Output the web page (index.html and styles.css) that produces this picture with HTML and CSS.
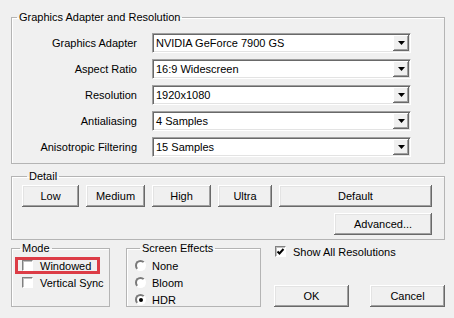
FILE: index.html
```html
<!DOCTYPE html>
<html lang="en">
<head>
  <meta charset="UTF-8" />
  <title>Display Settings</title>
  <link rel="stylesheet" href="styles.css">
</head>
<body>
  <div class="dialog">
    <fieldset class="group group-adapter">
      <legend>Graphics Adapter and Resolution</legend>
      <div class="field-row">
        <span class="field-label">Graphics Adapter</span>
        <div class="combo"><span class="combo-value">NVIDIA GeForce 7900 GS</span><span class="combo-btn"><svg width="7" height="4" viewBox="0 0 7 4"><path d="M0 0 H7 L3.5 4 Z" fill="#000"/></svg></span></div>
      </div>
      <div class="field-row">
        <span class="field-label">Aspect Ratio</span>
        <div class="combo"><span class="combo-value">16:9 Widescreen</span><span class="combo-btn"><svg width="7" height="4" viewBox="0 0 7 4"><path d="M0 0 H7 L3.5 4 Z" fill="#000"/></svg></span></div>
      </div>
      <div class="field-row">
        <span class="field-label">Resolution</span>
        <div class="combo"><span class="combo-value">1920x1080</span><span class="combo-btn"><svg width="7" height="4" viewBox="0 0 7 4"><path d="M0 0 H7 L3.5 4 Z" fill="#000"/></svg></span></div>
      </div>
      <div class="field-row">
        <span class="field-label">Antialiasing</span>
        <div class="combo"><span class="combo-value">4 Samples</span><span class="combo-btn"><svg width="7" height="4" viewBox="0 0 7 4"><path d="M0 0 H7 L3.5 4 Z" fill="#000"/></svg></span></div>
      </div>
      <div class="field-row">
        <span class="field-label">Anisotropic Filtering</span>
        <div class="combo"><span class="combo-value">15 Samples</span><span class="combo-btn"><svg width="7" height="4" viewBox="0 0 7 4"><path d="M0 0 H7 L3.5 4 Z" fill="#000"/></svg></span></div>
      </div>
    </fieldset>

    <fieldset class="group group-detail">
      <legend>Detail</legend>
      <div class="preset-row">
        <button class="btn btn-low">Low</button>
        <button class="btn btn-medium">Medium</button>
        <button class="btn btn-high">High</button>
        <button class="btn btn-ultra">Ultra</button>
        <button class="btn btn-default">Default</button>
      </div>
      <div class="advanced-row">
        <button class="btn btn-advanced">Advanced...</button>
      </div>
    </fieldset>

    <div class="bottom-row">
      <fieldset class="group group-mode">
        <legend>Mode</legend>
        <div class="check-row highlighted">
          <span class="checkbox"></span>
          <span>Windowed</span>
        </div>
        <div class="check-row">
          <span class="checkbox"></span>
          <span>Vertical Sync</span>
        </div>
      </fieldset>

      <fieldset class="group group-effects">
        <legend>Screen Effects</legend>
        <div class="radio-row"><span class="radio"></span><span>None</span></div>
        <div class="radio-row"><span class="radio"></span><span>Bloom</span></div>
        <div class="radio-row"><span class="radio checked"></span><span>HDR</span></div>
      </fieldset>

      <div class="side-col">
        <div class="check-row show-all">
          <span class="checkbox checked"><svg width="9" height="9" viewBox="0 0 9 9"><path d="M1.5 4.5 L3.5 6.5 L7.5 2" fill="none" stroke="#000" stroke-width="2"/></svg></span>
          <span>Show All Resolutions</span>
        </div>
        <div class="action-row">
          <button class="btn btn-action">OK</button>
          <button class="btn btn-action">Cancel</button>
        </div>
      </div>
    </div>
  </div>
</body>
</html>
```

FILE: styles.css
```css
body {
  margin: 0;
  background-color: #f0f0f0;
  font-family: "Liberation Sans", Arial, sans-serif;
  font-size: 11px;
  color: #000;
}

.dialog {
  width: 454px;
  height: 318px;
  box-sizing: border-box;
  padding: 10px 9px 0 11px;
}

/* group boxes */
.group {
  margin: 0;
  padding: 0;
  min-width: 0;
  border: 1px solid #b4b4b4;
  box-shadow: inset 1px 1px 0 #fff;
}

.group legend {
  margin-left: 5px;
  padding: 0 2px;
  line-height: 14px;
  font-size: 11px;
}

.group-adapter {
  display: flex;
  flex-direction: column;
  gap: 6px;
  padding: 9px 0 6px 0;
}

.field-row {
  display: flex;
  align-items: center;
  height: 20px;
}

.field-label {
  width: 125px;
  margin-right: 15px;
  text-align: right;
}

.combo {
  width: 259px;
  height: 20px;
  box-sizing: border-box;
  display: flex;
  align-items: center;
  background: #fff;
  border: 1px solid;
  border-color: #a0a0a0 #fff #fff #a0a0a0;
  box-shadow: inset 1px 1px 0 #696969, inset -1px -1px 0 #e3e3e3;
}

.combo-value {
  flex: 1;
  padding-left: 3px;
}

.combo-btn {
  width: 16px;
  height: 16px;
  margin-right: 1px;
  display: flex;
  align-items: center;
  justify-content: center;
  background: #f0f0f0;
  box-shadow: inset -1px -1px 0 #696969, inset 1px 1px 0 #fff, inset -2px -2px 0 #a0a0a0;
}

/* detail presets */
.group-detail {
  margin-top: 5px;
  padding: 2px 12px 4px 10px;
}

.preset-row {
  display: flex;
  gap: 7px;
}

.btn {
  height: 22px;
  padding: 0;
  border: none;
  background: #f0f0f0;
  font-family: inherit;
  font-size: 11px;
  color: #000;
  box-shadow: inset -1px -1px 0 #696969, inset 1px 1px 0 #fff, inset -2px -2px 0 #a0a0a0, inset 2px 2px 0 #e3e3e3;
}

.btn-low { width: 57px; }
.btn-medium { width: 59px; }
.btn-high { width: 59px; }
.btn-ultra { width: 54px; }
.btn-default { flex: 1; }

.advanced-row {
  display: flex;
  justify-content: flex-end;
  margin-top: 6px;
}

.btn-advanced {
  width: 98px;
}

/* bottom */
.bottom-row {
  display: flex;
  height: 66px;
  margin-top: 1px;
}

.group-mode {
  width: 99px;
  box-sizing: border-box;
  padding: 2px 0 0 3px;
}

.group-effects {
  width: 135px;
  box-sizing: border-box;
  margin-left: 16px;
  padding: 2px 0 0 8px;
}

.check-row {
  display: flex;
  align-items: center;
  height: 17px;
  box-sizing: border-box;
  border: 3px solid transparent;
  white-space: nowrap;
}

.check-row.highlighted {
  width: 85px;
  border-color: #dc3c46;
}

.checkbox {
  flex: none;
  width: 11px;
  height: 11px;
  box-sizing: border-box;
  margin: 0 7px 0 4px;
  display: flex;
  align-items: center;
  justify-content: center;
  background: #fff;
  border: 1px solid;
  border-color: #808080 #fff #fff #808080;
  box-shadow: inset 1px 1px 0 #c0c0c0;
}

.radio-row {
  display: flex;
  align-items: center;
  height: 17px;
}

.radio {
  width: 11px;
  height: 11px;
  box-sizing: border-box;
  margin-right: 6px;
  border-radius: 50%;
  border: 2px solid;
  border-color: #7a7a7a #fff #fff #7a7a7a;
  background: #fff;
  display: flex;
  align-items: center;
  justify-content: center;
}

.radio.checked::after {
  content: "";
  width: 4px;
  height: 4px;
  border-radius: 50%;
  background: #000;
}

.side-col {
  flex: 1;
  margin-left: 13px;
  display: flex;
  flex-direction: column;
  justify-content: space-between;
}

.show-all {
  height: 13px;
  margin-top: 4px;
  border: none;
}

.show-all .checkbox {
  margin: 0 7px 0 1px;
}

.action-row {
  display: flex;
  justify-content: space-between;
}

.btn-action {
  width: 75px;
}
```
